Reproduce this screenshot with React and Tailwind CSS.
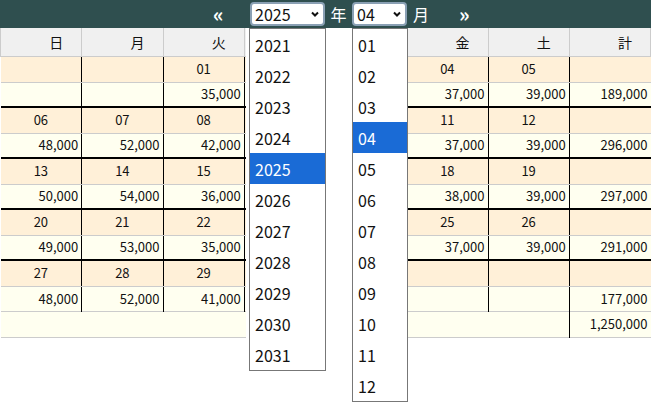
import React from "react";

const weeks = [
  { d: ["", "", "01", "02", "03", "04", "05"], a: ["", "", "35,000", "38,000", "40,000", "37,000", "39,000"], t: "189,000" },
  { d: ["06", "07", "08", "09", "10", "11", "12"], a: ["48,000", "52,000", "42,000", "39,000", "39,000", "37,000", "39,000"], t: "296,000" },
  { d: ["13", "14", "15", "16", "17", "18", "19"], a: ["50,000", "54,000", "36,000", "40,000", "40,000", "38,000", "39,000"], t: "297,000" },
  { d: ["20", "21", "22", "23", "24", "25", "26"], a: ["49,000", "53,000", "35,000", "39,000", "39,000", "37,000", "39,000"], t: "291,000" },
  { d: ["27", "28", "29", "30", "", "", ""], a: ["48,000", "52,000", "41,000", "36,000", "", "", ""], t: "177,000" },
];
const heads = ["日", "月", "火", "水", "木", "金", "土", "計"];
const years = ["2021","2022","2023","2024","2025","2026","2027","2028","2029","2030","2031"];
const months = ["01","02","03","04","05","06","07","08","09","10","11","12"];

function Chevron() {
  return (
    <svg width="10" height="10" viewBox="0 0 10 10" className="ml-auto">
      <path d="M2 3.5 L5 6.5 L8 3.5" fill="none" stroke="#111" strokeWidth="2" />
    </svg>
  );
}

export default function App() {
  const font = { fontFamily: '"Noto Sans CJK JP","Open Sans",sans-serif' };
  return (
    <div className="relative w-[651px] h-[402px] bg-white text-[13px] text-[#111] leading-[16px]" style={font}>
      <div className="h-[28px] bg-[#2f4f4f] flex items-center text-white">
        <div className="w-[213px]" />
        <span className="text-[20px] font-bold leading-none w-[37px]">«</span>
        <div className="w-[75px] h-[24px] bg-white rounded-[4px] border-2 border-[#8aa0b4] text-[#111] text-[16px] flex items-center px-[3px]">2025<Chevron /></div>
        <span className="text-[16px] w-[27px] text-center">年</span>
        <div className="w-[55px] h-[24px] bg-white rounded-[4px] border-2 border-[#8aa0b4] text-[#111] text-[16px] flex items-center px-[3px]">04<Chevron /></div>
        <span className="text-[16px] ml-[6px] w-[46px]">月</span>
        <span className="text-[20px] font-bold leading-none">»</span>
      </div>
      <table className="w-full table-fixed border-collapse">
        <thead>
          <tr className="h-[28px] bg-[#f0f0f0]">
            {heads.map((h, i) => (
              <th key={i} className="p-0 font-normal text-right pr-[18px] border border-[#ccc] border-t-0 text-[14px]">{h}</th>
            ))}
          </tr>
        </thead>
        <tbody>
          {weeks.map((w, wi) => (
            <React.Fragment key={wi}>
              <tr className={`h-[26px] bg-[#fff0d8] ${wi > 0 ? "border-t-2 border-t-black" : ""}`}>
                {w.d.map((d, i) => (
                  <td key={i} className={`p-0 text-center border-b border-b-[#ccc] ${i > 0 ? "border-l border-l-black" : ""}`}>{d}</td>
                ))}
                <td className="p-0 border-l border-l-black border-b border-b-[#ccc]"></td>
              </tr>
              <tr className="h-[25px] bg-[#fffff0]">
                {w.a.map((a, i) => (
                  <td key={i} className={`p-0 text-right pr-[3px] ${i > 0 ? "border-l border-l-black" : ""}`}>{a}</td>
                ))}
                <td className="p-0 text-right pr-[3px] border-l border-l-black">{w.t}</td>
              </tr>
            </React.Fragment>
          ))}
          <tr className="h-[26px] bg-[#fffff0] border-t border-t-[#ccc] border-b border-b-[#ccc]">
            <td colSpan={7} className="p-0"></td>
            <td className="p-0 text-right pr-[3px] border-l border-l-black">1,250,000</td>
          </tr>
        </tbody>
      </table>
      <div className="absolute left-[246px] top-[28px] w-[161px] h-[310px] bg-white" />
      <div className="absolute left-[249px] top-[28px] w-[77px] bg-white border border-[#777] text-[16px]">
        {years.map((y) => (
          <div key={y} className={`h-[31px] flex items-center pl-[5px] ${y === "2025" ? "bg-[#1a6bd6] text-white" : ""}`}>{y}</div>
        ))}
      </div>
      <div className="absolute left-[352px] top-[28px] w-[56px] bg-white border border-[#777] text-[16px]">
        {months.map((m) => (
          <div key={m} className={`h-[31px] flex items-center pl-[5px] ${m === "04" ? "bg-[#1a6bd6] text-white" : ""}`}>{m}</div>
        ))}
      </div>
    </div>
  );
}
